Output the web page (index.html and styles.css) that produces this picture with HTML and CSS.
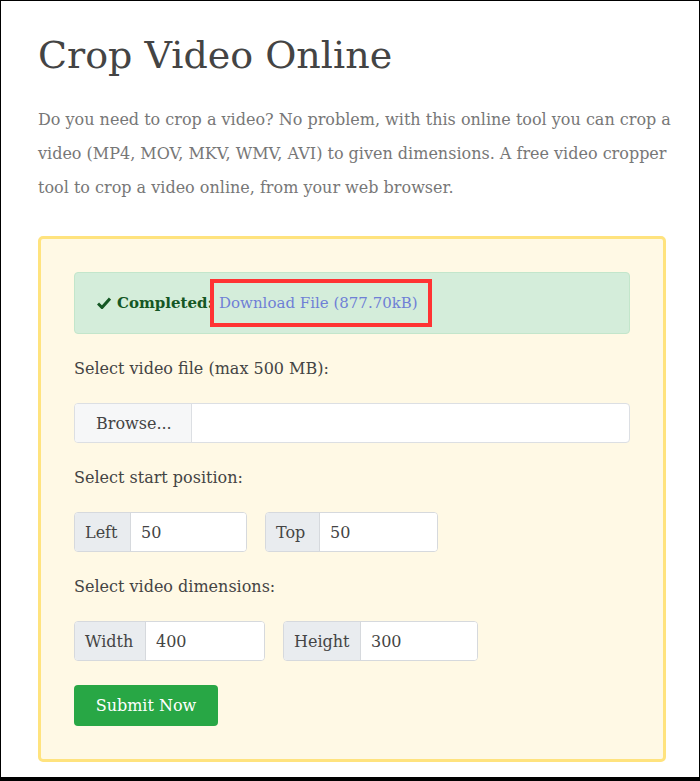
FILE: index.html
```html
<!DOCTYPE html>
<html lang="en">

<head>
  <meta charset="UTF-8">
  <meta name="viewport" content="width=device-width, initial-scale=1.0">
  <title>Crop Video Online</title>
  <link rel="stylesheet" href="styles.css">
</head>

<body>
  <div class="page">
    <h1>Crop Video Online</h1>
    <p class="intro">Do you need to crop a video? No problem, with this online tool you can crop a video (MP4, MOV, MKV, WMV, AVI) to given dimensions. A free video cropper tool to crop a video online, from your web browser.</p>

    <div class="tool_box">
      <div class="alert_ok">
        <svg class="check" width="14" height="12" viewBox="0 0 14 12">
          <path d="M1 6.5 L5 10.5 L13 1.5" fill="none" stroke="#155724" stroke-width="3"/>
        </svg>
        <b>Completed:</b><span class="mark"><a href="#">Download File (877.70kB)</a></span>
      </div>

      <label class="field_label">Select video file (max 500 MB):</label>
      <div class="file_input">
        <span class="browse">Browse...</span>
        <span class="file_name"></span>
      </div>

      <label class="field_label">Select start position:</label>
      <div class="row">
        <div class="input_group group_left">
          <span class="prefix">Left</span>
          <input type="text" value="50">
        </div>
        <div class="input_group group_top">
          <span class="prefix">Top</span>
          <input type="text" value="50">
        </div>
      </div>

      <label class="field_label">Select video dimensions:</label>
      <div class="row">
        <div class="input_group group_width">
          <span class="prefix">Width</span>
          <input type="text" value="400">
        </div>
        <div class="input_group group_height">
          <span class="prefix">Height</span>
          <input type="text" value="300">
        </div>
      </div>

      <button type="button" class="submit_btn">Submit Now</button>
    </div>
  </div>
</body>

</html>
```

FILE: styles.css
```css
html,
body {
  margin: 0;
  padding: 0;
  background: #fff;
}

body {
  font-family: "DejaVu Serif", serif;
  font-size: 16px;
  color: #444;
  box-sizing: border-box;
  width: 700px;
  height: 781px;
  border: 1px solid #000;
  border-bottom-width: 4px;
  overflow: hidden;
}

.page {
  padding: 0 33px 0 37px;
}

h1 {
  margin: 29px 0 0;
  font-size: 38px;
  font-weight: normal;
  line-height: 50px;
  color: #444;
}

.intro {
  margin: 23px -14px 0 0;
  line-height: 34px;
  color: #777;
}

.tool_box {
  margin-top: 31px;
  border: 3px solid #ffe37e;
  border-radius: 5px;
  background: #fff9e5;
  padding: 33px 33px 33px;
}

.alert_ok {
  display: flex;
  align-items: center;
  height: 62px;
  box-sizing: border-box;
  padding: 0 22px;
  border: 1px solid #c3e6cb;
  border-radius: 4px;
  background: #d4edda;
  color: #155724;
  font-size: 15px;
}

.check {
  margin-right: 6px;
}

.mark {
  border: 4px solid #ff3333;
  padding: 11px 10px 11px 5px;
  margin-left: -3px;
}

.mark a {
  color: #6f7fd6;
  text-decoration: none;
}

.field_label {
  display: block;
  line-height: 24px;
  margin: 23px 0 22px;
}

.file_input {
  display: flex;
  height: 40px;
  box-sizing: border-box;
  border: 1px solid #dcdfe3;
  border-radius: 4px;
  background: #fff;
  overflow: hidden;
}

.browse {
  display: flex;
  align-items: center;
  width: 117px;
  padding-left: 21px;
  box-sizing: border-box;
  background: #f6f7f8;
  border-right: 1px solid #dcdfe3;
}

.row {
  display: flex;
  gap: 18px;
}

.input_group {
  display: flex;
  height: 40px;
  box-sizing: border-box;
  border: 1px solid #d6d9dd;
  border-radius: 4px;
  background: #fff;
  overflow: hidden;
}

.prefix {
  display: flex;
  align-items: center;
  box-sizing: border-box;
  padding-left: 10px;
  background: #e9ecef;
  border-right: 1px solid #d6d9dd;
}

.input_group input {
  flex: 1;
  min-width: 0;
  border: none;
  outline: none;
  font: inherit;
  color: #444;
  padding: 0 10px;
  background: #fff;
}

.group_left,
.group_top {
  width: 173px;
}

.group_left .prefix {
  width: 56px;
}

.group_top .prefix {
  width: 54px;
}

.group_width {
  width: 191px;
}

.group_width .prefix {
  width: 71px;
}

.group_height {
  width: 195px;
}

.group_height .prefix {
  width: 77px;
}

.submit_btn {
  margin-top: 24px;
  width: 144px;
  height: 41px;
  padding: 0;
  border: none;
  border-radius: 4px;
  background: #28a745;
  color: #fff;
  font: inherit;
}
```
